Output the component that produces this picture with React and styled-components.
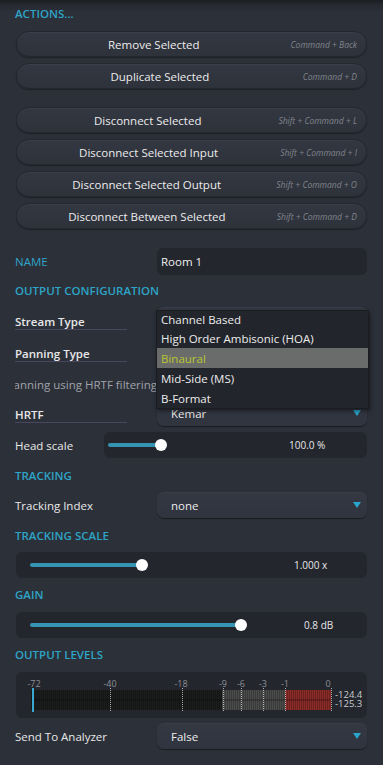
import React from "react";
import styled, { createGlobalStyle } from "styled-components";

const Global = createGlobalStyle`
  html, body { margin: 0; padding: 0; }
  body {
    width: 383px; height: 765px; overflow: hidden;
    background: linear-gradient(#1b1d22 0px, #262930 5px, #2c3039 12px, #2c3039 100%);
    font-family: "Open Sans", "Noto Sans", sans-serif;
    color: #e6e6e6;
  }
`;

const Page = styled.div`
  display: flex;
  flex-direction: column;
  padding: 6px 16px 0 16px;
`;

const Header = styled.div`
  height: 16px;
  line-height: 16px;
  margin-top: ${(p) => p.$mt || 0}px;
  margin-left: -1px;
  color: #2ea4c6;
  font-size: 11.5px;
  font-weight: 600;
`;

const ButtonGroup = styled.div`
  display: flex;
  flex-direction: column;
  gap: 6px;
  margin-top: ${(p) => p.$mt || 0}px;
`;

const ActionButton = styled.div`
  height: 26px;
  box-sizing: border-box;
  border-radius: 13px;
  display: flex;
  align-items: center;
  padding-right: 9px;
  background: linear-gradient(#333741, #2e323b);
  border: 1px solid #24272e;
  box-shadow: inset 0 1px 0 rgba(255, 255, 255, 0.04), 0 1px 1px rgba(0, 0, 0, 0.35);
`;

const ButtonLabel = styled.span`
  flex: 1;
  text-align: center;
  font-size: 11.5px;
  color: #ececec;
`;

const Shortcut = styled.span`
  font-size: 8.5px;
  font-style: italic;
  color: #80848c;
`;

const Row = styled.div`
  display: flex;
  align-items: center;
  height: ${(p) => p.$h || 26}px;
  margin-top: ${(p) => p.$mt || 0}px;
`;

const Label = styled.div`
  flex: ${(p) => (p.$w ? `0 0 ${p.$w}px` : "1 1 0")};
  min-width: 0;
  margin-left: -1px;
  font-size: 11.5px;
  font-weight: ${(p) => (p.$strong ? 600 : 400)};
  color: ${(p) => (p.$accent ? "#2ea4c6" : "#e8e8e8")};
  align-self: stretch;
  display: flex;
  align-items: center;
  white-space: nowrap;
`;

const LabelText = styled.span`
  display: inline-block;
  width: 112px;
  border-bottom: 1px solid #4a4660;
  line-height: 15px;
  padding-top: 3px;
`;

const Control = styled.div`
  position: relative;
  flex: 0 0 210px;
  height: 100%;
`;

const TextField = styled.div`
  height: 100%;
  box-sizing: border-box;
  border-radius: 6px;
  background: #23262d;
  display: flex;
  align-items: center;
  padding-left: 4px;
  font-size: 11.5px;
  color: #f0f0f0;
`;

const Select = styled.div`
  height: 100%;
  box-sizing: border-box;
  border-radius: 7px;
  background: linear-gradient(#343843, #30343e);
  box-shadow: 0 1px 1px rgba(0, 0, 0, 0.45), inset 0 1px 0 rgba(255, 255, 255, 0.03);
  display: flex;
  align-items: center;
  padding: 0 6px 0 14px;
  font-size: 11.5px;
  color: #ececec;
`;

const SelectValue = styled.span`
  flex: 1;
  visibility: ${(p) => (p.$covered ? "hidden" : "visible")};
`;

const Caret = styled.span`
  width: 0;
  height: 0;
  border-left: 4px solid transparent;
  border-right: 4px solid transparent;
  border-top: 6px solid #2aa6cc;
`;

const Popup = styled.div`
  position: absolute;
  top: 3px;
  left: -1px;
  width: 213px;
  box-sizing: border-box;
  background: #22252b;
  border: 1px solid #1a1c20;
  box-shadow: 1px 2px 4px rgba(0, 0, 0, 0.5);
  z-index: 5;
  display: flex;
  flex-direction: column;
`;

const PopupItem = styled.div`
  height: ${(p) => (p.$first ? 17 : 20)}px;
  display: flex;
  align-items: center;
  padding-left: 4px;
  font-size: 11.5px;
  color: ${(p) => (p.$active ? "#b8c831" : "#ececec")};
  background: ${(p) => (p.$active ? "#6a6b6b" : "transparent")};
`;

const Hint = styled.div`
  height: 26px;
  width: 142px;
  margin-left: -1px;
  margin-top: ${(p) => p.$mt || 0}px;
  overflow: hidden;
  white-space: nowrap;
  display: flex;
  justify-content: flex-end;
  align-items: center;
  font-size: 11.5px;
  color: #a0a3a9;
`;

const SliderBox = styled.div`
  flex: 1;
  height: ${(p) => p.$h || 26}px;
  box-sizing: border-box;
  border-radius: 6px;
  background: #23262d;
  display: flex;
  align-items: center;
  padding-left: ${(p) => p.$pad}px;
`;

const Track = styled.div`
  position: relative;
  height: 4px;
  border-radius: 2px;
  background: #3594b2;
`;

const Thumb = styled.div`
  position: absolute;
  right: -6px;
  top: -4px;
  width: 12px;
  height: 12px;
  border-radius: 50%;
  background: #ffffff;
`;

const SliderValue = styled.span`
  margin-left: auto;
  width: ${(p) => p.$w}px;
  font-size: 10px;
  color: #e8e8e8;
`;

const MeterBox = styled.div`
  height: 46px;
  margin-top: ${(p) => p.$mt || 0}px;
  border-radius: 6px;
  background: #23262d;
  overflow: hidden;
`;

const buttonsA = [
  ["Remove Selected", "Command + Back"],
  ["Duplicate Selected", "Command + D"],
];
const buttonsB = [
  ["Disconnect Selected", "Shift + Command + L"],
  ["Disconnect Selected Input", "Shift + Command + I"],
  ["Disconnect Selected Output", "Shift + Command + O"],
  ["Disconnect Between Selected", "Shift + Command + D"],
];

const streamTypes = ["Channel Based", "High Order Ambisonic (HOA)", "Binaural", "Mid-Side (MS)", "B-Format"];

function Slider({ pad, fill, value, valueW }) {
  return (
    <SliderBox $pad={pad}>
      <Track style={{ width: fill }}>
        <Thumb />
      </Track>
      <SliderValue $w={valueW}>{value}</SliderValue>
    </SliderBox>
  );
}

const ticks = [
  ["-72", 16, 18],
  ["-40", 94, 94],
  ["-18", 166, 165],
  ["-9", 207, 207],
  ["-6", 225, 225],
  ["-3", 247, 247],
  ["-1", 269, 269],
  ["0", 315, 312],
];

function Meter() {
  return (
    <svg width="351" height="46" viewBox="0 0 351 46">
      <defs>
        <pattern id="stripes" width="2" height="4" patternUnits="userSpaceOnUse">
          <rect x="1" y="0" width="1" height="4" fill="rgba(0,0,0,0.22)" />
        </pattern>
      </defs>
      <rect x="15" y="18" width="191" height="20" fill="#1b1c1c" />
      <rect x="206" y="18" width="63" height="20" fill="#4a4c4a" />
      <rect x="269" y="18" width="46" height="20" fill="#8a2b28" />
      <rect x="15" y="18" width="300" height="20" fill="url(#stripes)" />
      <rect x="15" y="27.5" width="300" height="1" fill="rgba(0,0,0,0.4)" />
      {ticks.map(([t, x, lx]) => (
        <g key={t}>
          <line x1={x + 0.5} y1="16" x2={x + 0.5} y2="40" stroke="rgba(235,235,235,0.7)" strokeWidth="1" strokeDasharray="1 1" />
          <text x={lx} y="15" fill="#8d9096" fontSize="9" textAnchor="middle" fontFamily="Open Sans, sans-serif">{t}</text>
        </g>
      ))}
      <rect x="16" y="16" width="2" height="24" fill="#3aa8cc" />
      <text x="319" y="25.5" fill="#c9cbcf" fontSize="9.5" fontFamily="Open Sans, sans-serif">-124.4</text>
      <text x="319" y="35" fill="#c9cbcf" fontSize="9.5" fontFamily="Open Sans, sans-serif">-125.3</text>
    </svg>
  );
}

export default function App() {
  return (
    <>
      <Global />
      <Page>
        <Header>ACTIONS...</Header>
        <ButtonGroup $mt={9}>
          {buttonsA.map(([l, s]) => (
            <ActionButton key={l}>
              <ButtonLabel>{l}</ButtonLabel>
              <Shortcut>{s}</Shortcut>
            </ActionButton>
          ))}
        </ButtonGroup>
        <ButtonGroup $mt={18}>
          {buttonsB.map(([l, s]) => (
            <ActionButton key={l}>
              <ButtonLabel>{l}</ButtonLabel>
              <Shortcut>{s}</Shortcut>
            </ActionButton>
          ))}
        </ButtonGroup>

        <Row $mt={19} $h={27}>
          <Label $accent>NAME</Label>
          <Control>
            <TextField>Room 1</TextField>
          </Control>
        </Row>

        <Header $mt={8}>OUTPUT CONFIGURATION</Header>

        <Row $mt={8}>
          <Label $strong>
            <LabelText>Stream Type</LabelText>
          </Label>
          <Control>
            <Select>
              <SelectValue $covered>Binaural</SelectValue>
              <Caret />
            </Select>
            <Popup>
              {streamTypes.map((t, i) => (
                <PopupItem key={t} $active={t === "Binaural"} $first={i === 0}>
                  {t}
                </PopupItem>
              ))}
            </Popup>
          </Control>
        </Row>
        <Row $mt={6}>
          <Label $strong>
            <LabelText>Panning Type</LabelText>
          </Label>
          <Control>
            <Select>
              <SelectValue $covered>HRTF</SelectValue>
              <Caret />
            </Select>
          </Control>
        </Row>
        <Hint $mt={6}>Panning using HRTF filtering</Hint>
        <Row $mt={3}>
          <Label $strong>
            <LabelText>HRTF</LabelText>
          </Label>
          <Control>
            <Select>
              <SelectValue>Kemar</SelectValue>
              <Caret />
            </Select>
          </Control>
        </Row>
        <Row $mt={6}>
          <Label $w={89}>Head scale</Label>
          <Slider pad={4} fill={53} value="100.0 %" valueW={78} />
        </Row>

        <Header $mt={10}>TRACKING</Header>
        <Row $mt={8}>
          <Label>Tracking Index</Label>
          <Control>
            <Select>
              <SelectValue>none</SelectValue>
              <Caret />
            </Select>
          </Control>
        </Row>

        <Header $mt={10}>TRACKING SCALE</Header>
        <Row $mt={8}>
          <Slider pad={14} fill={112} value="1.000 x" valueW={73} />
        </Row>

        <Header $mt={9}>GAIN</Header>
        <Row $mt={9}>
          <Slider pad={14} fill={211} value="0.8 dB" valueW={63} />
        </Row>

        <Header $mt={9}>OUTPUT LEVELS</Header>
        <MeterBox $mt={9}>
          <Meter />
        </MeterBox>

        <Row $mt={5}>
          <Label>Send To Analyzer</Label>
          <Control>
            <Select>
              <SelectValue>False</SelectValue>
              <Caret />
            </Select>
          </Control>
        </Row>
      </Page>
    </>
  );
}
